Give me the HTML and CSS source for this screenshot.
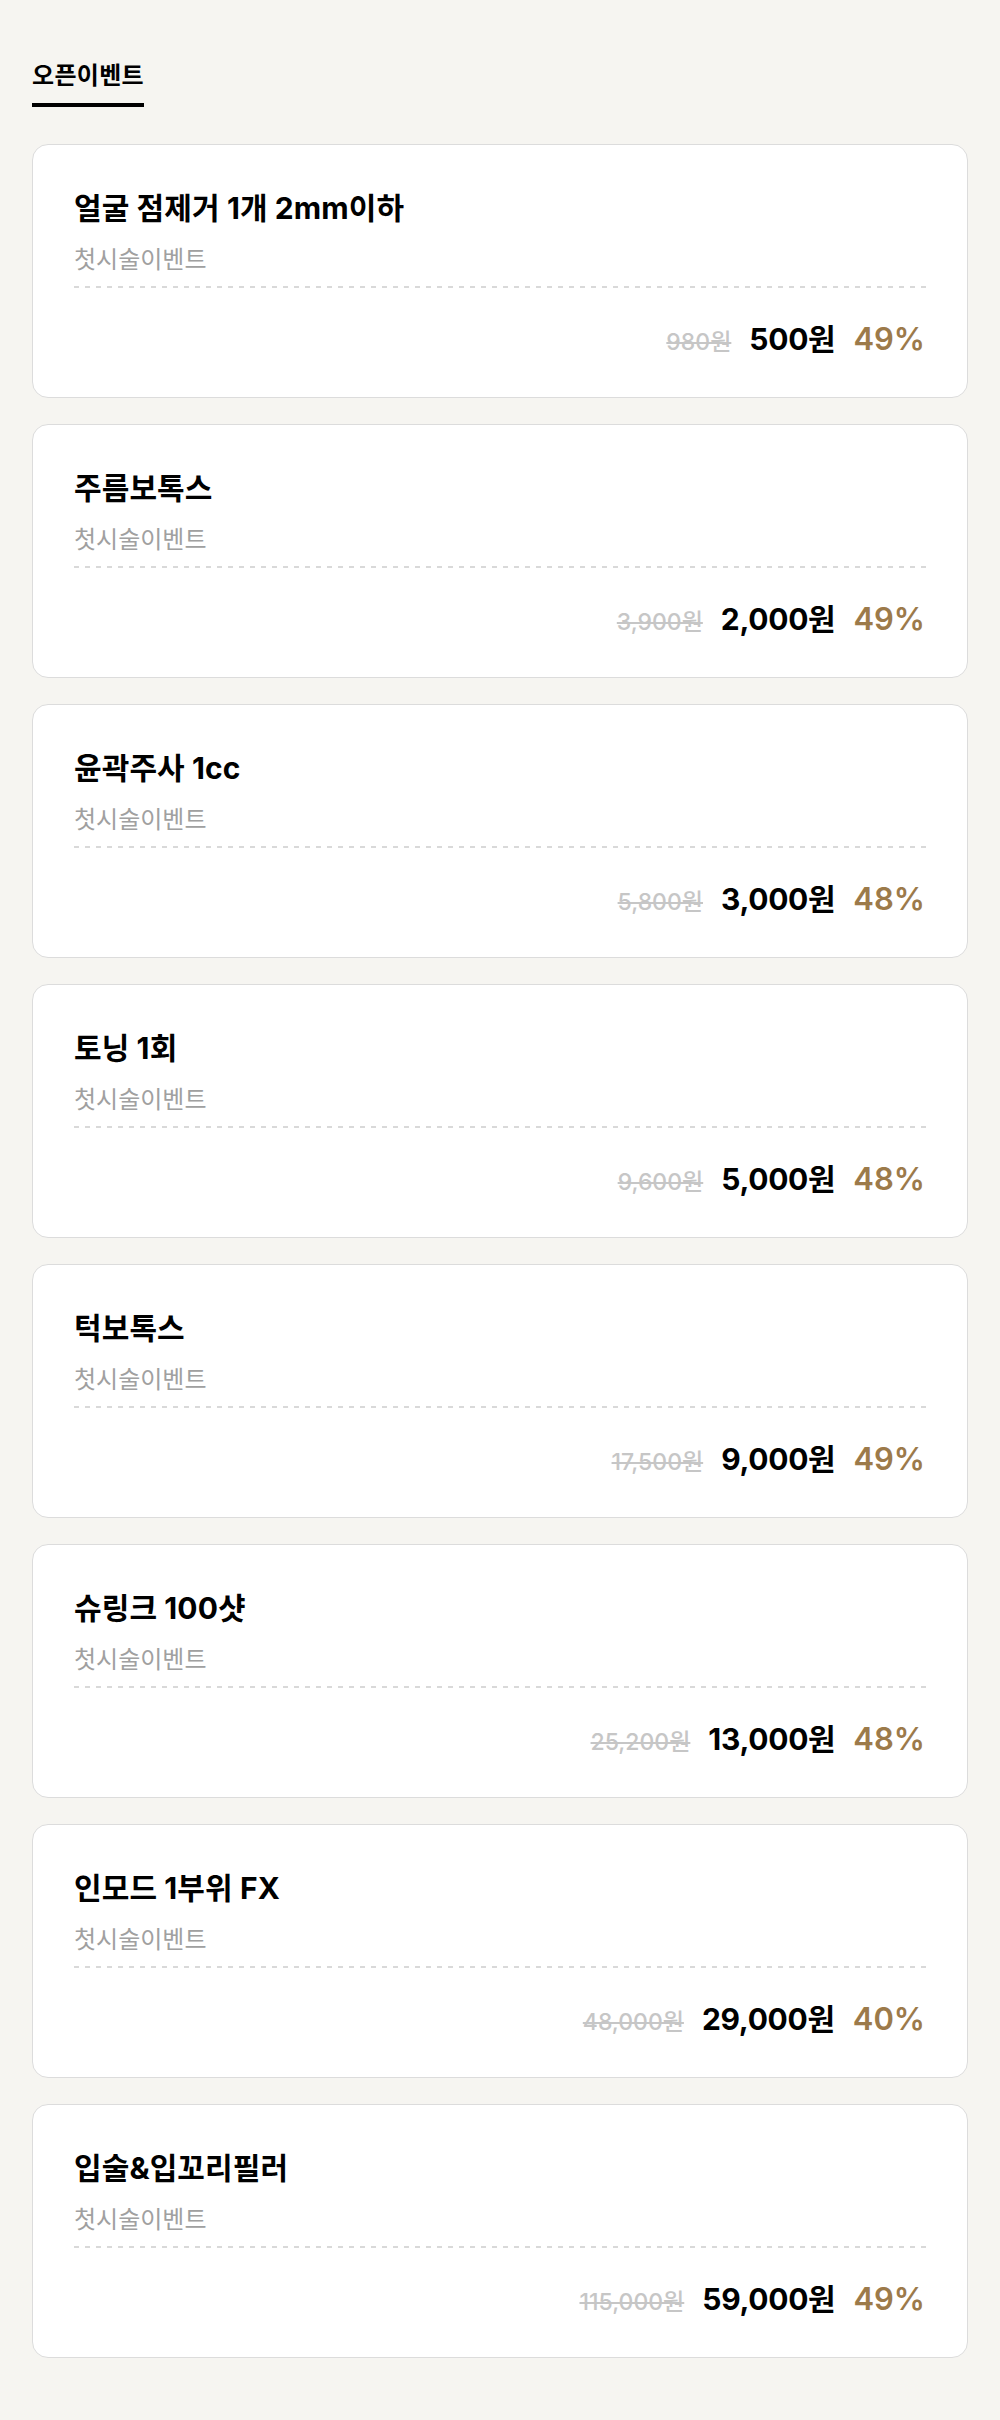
FILE: index.html
```html
<!DOCTYPE html>
<html lang="ko">
<head>
<meta charset="utf-8">
<title>오픈이벤트</title>
<link rel="stylesheet" href="styles.css">
</head>
<body>
<div class="page">
  <div class="tabs"><span class="tab">오픈이벤트</span></div>
  <div class="list">
    <div class="card">
      <div class="title">얼굴 점제거 1개 2mm이하</div>
      <div class="sub">첫시술이벤트</div>
      <div class="divider"></div>
      <div class="price"><span class="old">980원</span><span class="now">500원</span><span class="rate">49%</span></div>
    </div>
    <div class="card">
      <div class="title">주름보톡스</div>
      <div class="sub">첫시술이벤트</div>
      <div class="divider"></div>
      <div class="price"><span class="old">3,900원</span><span class="now">2,000원</span><span class="rate">49%</span></div>
    </div>
    <div class="card">
      <div class="title">윤곽주사 1cc</div>
      <div class="sub">첫시술이벤트</div>
      <div class="divider"></div>
      <div class="price"><span class="old">5,800원</span><span class="now">3,000원</span><span class="rate">48%</span></div>
    </div>
    <div class="card">
      <div class="title">토닝 1회</div>
      <div class="sub">첫시술이벤트</div>
      <div class="divider"></div>
      <div class="price"><span class="old">9,600원</span><span class="now">5,000원</span><span class="rate">48%</span></div>
    </div>
    <div class="card">
      <div class="title">턱보톡스</div>
      <div class="sub">첫시술이벤트</div>
      <div class="divider"></div>
      <div class="price"><span class="old">17,500원</span><span class="now">9,000원</span><span class="rate">49%</span></div>
    </div>
    <div class="card">
      <div class="title">슈링크 100샷</div>
      <div class="sub">첫시술이벤트</div>
      <div class="divider"></div>
      <div class="price"><span class="old">25,200원</span><span class="now">13,000원</span><span class="rate">48%</span></div>
    </div>
    <div class="card">
      <div class="title">인모드 1부위 FX</div>
      <div class="sub">첫시술이벤트</div>
      <div class="divider"></div>
      <div class="price"><span class="old">48,000원</span><span class="now">29,000원</span><span class="rate">40%</span></div>
    </div>
    <div class="card">
      <div class="title">입술&amp;입꼬리필러</div>
      <div class="sub">첫시술이벤트</div>
      <div class="divider"></div>
      <div class="price"><span class="old">115,000원</span><span class="now">59,000원</span><span class="rate">49%</span></div>
    </div>
  </div>
</div>
</body>
</html>
```
FILE: styles.css
```css
html, body {
  margin: 0;
  padding: 0;
  background: #f6f5f1;
}
body {
  font-family: Inter, "Noto Sans CJK KR", sans-serif;
  color: #000;
}
.page {
  padding: 60px 32px 40px;
}
.tabs {
  display: flex;
}
.tab {
  font-size: 24px;
  font-weight: 700;
  line-height: 32px;
  padding-bottom: 11px;
  border-bottom: 4px solid #000;
  letter-spacing: 0.3px;
}
.list {
  display: flex;
  flex-direction: column;
  gap: 26px;
  margin-top: 37px;
}
.card {
  background: #fff;
  border: 1.5px solid #dcdcdc;
  border-radius: 16px;
  padding: 43px 41px 0;
  height: 254px;
  box-sizing: border-box;
}
.title {
  font-size: 30px;
  font-weight: 700;
  line-height: 40px;
  letter-spacing: 0.1px;
}
.sub {
  font-size: 24px;
  line-height: 32px;
  color: #a0a0a0;
  margin-top: 16px;
}
.divider {
  height: 2px;
  margin-top: 10px;
  background: repeating-linear-gradient(90deg, #d9d9d9 0 5px, transparent 5px 11px);
}
.price {
  display: flex;
  justify-content: flex-end;
  align-items: baseline;
  gap: 18px;
  margin-top: 27px;
  padding-right: 1px;
}
.old {
  font-size: 23px;
  font-weight: 500;
  color: #c6c6c6;
  text-decoration: line-through;
}
.now {
  font-size: 30px;
  font-weight: 700;
  letter-spacing: -0.3px;
}
.rate {
  font-size: 31px;
  font-weight: 600;
  color: #9c7a4a;
}
```
